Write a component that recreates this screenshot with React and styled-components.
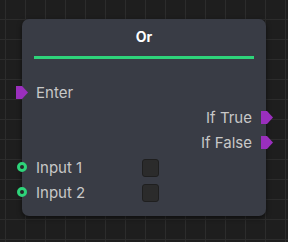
import React from "react";
import styled, { createGlobalStyle } from "styled-components";

const Global = createGlobalStyle`
  body {
    margin: 0;
    background: #1e1e1e;
    font-family: Inter, "Noto Sans", sans-serif;
  }
`;

const Canvas = styled.div`
  width: 288px;
  height: 242px;
  box-sizing: border-box;
  padding: 19px 0 0 22px;
  background-color: #1e1e1e;
  background-image: linear-gradient(#2c2c2c 1px, transparent 1px),
    linear-gradient(90deg, #2c2c2c 1px, transparent 1px);
  background-size: 20px 20px;
  background-position: 5px 19px;
  overflow: hidden;
`;

const Node = styled.div`
  position: relative;
  width: 244px;
  height: 197px;
  background: #393c45;
  border-radius: 7px;
  box-shadow: 0 2px 5px rgba(0, 0, 0, 0.55);
  display: flex;
  flex-direction: column;
`;

const Header = styled.div`
  height: 37px;
  display: flex;
  align-items: center;
  justify-content: center;
  padding-bottom: 3px;
  box-sizing: border-box;
  color: #fff;
  font-weight: 700;
  font-size: 14px;
`;

const Divider = styled.div`
  height: 3px;
  margin: 0 12px;
  background: #2ed47a;
`;

const Rows = styled.div`
  padding-top: 21px;
  display: flex;
  flex-direction: column;
`;

const Row = styled.div`
  position: relative;
  height: 25px;
  display: flex;
  align-items: center;
  justify-content: ${(p) => (p.$out ? "flex-end" : "flex-start")};
  padding: ${(p) => (p.$out ? "0 14px 0 0" : "0 0 0 14px")};
  color: #c8c8c8;
  font-size: 15px;
`;

const Label = styled.span`
  width: ${(p) => (p.$w ? p.$w + "px" : "auto")};
`;

const ExecPin = styled.span`
  position: absolute;
  top: 6px;
  ${(p) => (p.$out ? "right: -7px;" : "left: -6px;")}
  width: 12px;
  height: 13px;
  background: #9a2fbd;
  clip-path: polygon(0 0, 50% 0, 100% 50%, 50% 100%, 0 100%);
`;

const DataPin = styled.span`
  position: absolute;
  left: -5px;
  top: 7px;
  width: 4px;
  height: 4px;
  border: 3px solid #2ed47a;
  border-radius: 50%;
  background: #262729;
`;

const Check = styled.span`
  width: 15px;
  height: 16px;
  border: 1px solid #1f1f1f;
  border-radius: 3px;
  background: #2b2b2b;
`;

export default function App() {
  return (
    <>
      <Global />
      <Canvas>
        <Node>
          <Header>Or</Header>
          <Divider />
          <Rows>
            <Row>
              <ExecPin />
              <Label>Enter</Label>
            </Row>
            <Row $out>
              <Label>If True</Label>
              <ExecPin $out />
            </Row>
            <Row $out>
              <Label>If False</Label>
              <ExecPin $out />
            </Row>
            <Row>
              <DataPin />
              <Label $w={106}>Input 1</Label>
              <Check />
            </Row>
            <Row>
              <DataPin />
              <Label $w={106}>Input 2</Label>
              <Check />
            </Row>
          </Rows>
        </Node>
      </Canvas>
    </>
  );
}
